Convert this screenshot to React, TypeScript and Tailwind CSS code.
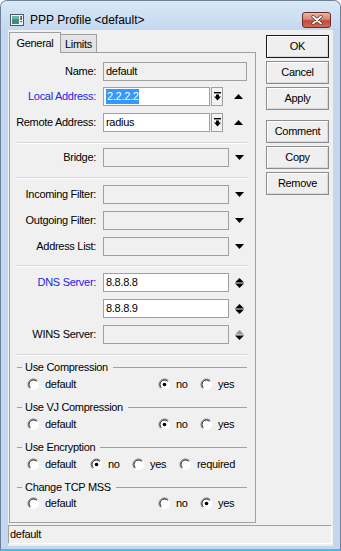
import React from "react";

function Radio({ checked }: { checked?: boolean }) {
  return (
    <svg width="13" height="13" viewBox="0 0 13 13" className="shrink-0">
      <circle cx="6.5" cy="6.5" r="5.5" fill="#fff" />
      <path d="M10.4 2.6 A5.5 5.5 0 0 0 2.6 10.4" stroke="#7a7a7a" fill="none" strokeWidth="1" />
      <path d="M9.7 3.3 A4.5 4.5 0 0 0 3.3 9.7" stroke="#1a1a1a" fill="none" strokeWidth="1" />
      {checked && <circle cx="6.5" cy="6.5" r="1.8" fill="#000" />}
    </svg>
  );
}

function RadioItem({ label, checked, w }: { label: string; checked?: boolean; w?: string }) {
  return (
    <div className={`flex items-center h-[14px] ${w ?? ""}`}>
      <Radio checked={checked} />
      <span className="ml-[5px]">{label}</span>
    </div>
  );
}

function GroupHeader({ title, mt }: { title: string; mt: string }) {
  return (
    <div className={`flex items-center h-[14px] ${mt}`}>
      <div className="ml-[7px] w-[5px] h-px bg-[#a0a0a0]" />
      <span className="ml-[3px]">{title}</span>
      <div className="ml-[5px] mr-[8px] flex-1 h-px bg-[#a0a0a0]" />
    </div>
  );
}

function Row({
  label,
  blue,
  mt,
  children,
}: {
  label?: string;
  blue?: boolean;
  mt: string;
  children: React.ReactNode;
}) {
  return (
    <div className={`flex items-center h-[19px] ${mt}`}>
      <div className={`w-[86px] text-right whitespace-nowrap ${blue ? "text-[#1c1ce6]" : "text-black"}`}>
        {label}
      </div>
      <div className="ml-[7px] flex items-center">{children}</div>
    </div>
  );
}

function Field({ w, white, children }: { w: string; white?: boolean; children?: React.ReactNode }) {
  return (
    <div
      className={`h-[19px] ${w} border border-[#a0a0a0] ${
        white ? "bg-white" : "bg-[#f0f0f0]"
      } flex items-center pl-[2px] overflow-hidden whitespace-nowrap`}
    >
      {children}
    </div>
  );
}

function Sep({ mt }: { mt: string }) {
  return (
    <div className={`ml-[7px] w-[230px] ${mt}`}>
      <div className="h-px bg-[#d5d5d5]" />
      <div className="h-px bg-white" />
    </div>
  );
}

function DropBtn() {
  return (
    <div className="ml-[1px] w-[12px] h-[19px] border border-[#a0a0a0] bg-[#f4f4f4] flex items-center justify-center">
      <svg width="7" height="9" viewBox="0 0 7 9">
        <rect x="0" y="0" width="7" height="1.4" fill="#000" />
        <path d="M2 2.6h3v2h2l-3.5 4l-3.5-4h2z" fill="#000" />
      </svg>
    </div>
  );
}

function Up({ ml }: { ml: string }) {
  return (
    <svg width="9" height="5" viewBox="0 0 9 5" className={ml}>
      <path d="M0 5L4.5 0L9 5Z" fill="#000" />
    </svg>
  );
}

function Down({ ml }: { ml: string }) {
  return (
    <svg width="9" height="5" viewBox="0 0 9 5" className={ml}>
      <path d="M0 0L9 0L4.5 5Z" fill="#000" />
    </svg>
  );
}

function UpDown({ disabled }: { disabled?: boolean }) {
  return (
    <svg width="9" height="10" viewBox="0 0 9 10" className="ml-[6px]">
      <path d="M0 4.5L4.5 0L9 4.5Z" fill={disabled ? "#8e9a8e" : "#000"} />
      <path d="M0 5.5L9 5.5L4.5 10Z" fill="#000" />
    </svg>
  );
}

function Btn({ children, def, mt }: { children: React.ReactNode; def?: boolean; mt?: string }) {
  return (
    <div
      className={`h-[23px] w-[63px] flex items-center justify-center border ${
        def ? "border-[#1a1a1a]" : "border-[#8c8c8c]"
      } bg-[#efefef] shadow-[inset_1px_1px_0_#ffffff,inset_-1px_-1px_0_#d8d8d8] ${mt ?? ""}`}
    >
      {children}
    </div>
  );
}

export default function App() {
  return (
    <div className="w-[341px] h-[551px] overflow-hidden font-['Liberation_Sans',Arial,sans-serif] text-[11px] tracking-[-0.3px] text-black">
      <div className="w-[341px] h-[551px] flex flex-col rounded-t-[7px] border-t border-x border-[#6f8096] bg-[#c3d8ef] border-b-2 border-b-[#36c3e6]">
        {/* Title bar */}
        <div className="h-[29px] flex items-center pt-[8px] pl-[9px] pr-[9px] rounded-t-[6px] bg-[linear-gradient(#d9e8f7,#c3d8ef)]">
          <svg width="14" height="12" viewBox="0 0 14 12">
            <rect x="0.5" y="0.5" width="13" height="11" fill="#eef2f2" stroke="#505a5a" />
            <rect x="2" y="2" width="7" height="8" fill="#3b8e80" />
            <rect x="2" y="2" width="7" height="3" fill="#6fb3a8" />
            <rect x="10.5" y="2" width="1.2" height="4" fill="#1a1a1a" />
            <rect x="10.5" y="7" width="1.2" height="1.2" fill="#1a1a1a" />
          </svg>
          <span className="ml-[6px] text-[12px] tracking-normal">PPP Profile &lt;default&gt;</span>
          <div className="ml-auto w-[29px] h-[16px] rounded-[3px] border border-[#6e2b22] bg-[linear-gradient(#e8b5aa,#d88677_45%,#c44a3a_55%,#cf6a58)] flex items-center justify-center">
            <svg width="12" height="10" viewBox="0 0 12 10">
              <path d="M2 1.5L10 8.5M10 1.5L2 8.5" stroke="#5a2a25" strokeWidth="3.2" strokeLinecap="round" />
              <path d="M2 1.5L10 8.5M10 1.5L2 8.5" stroke="#fff" strokeWidth="1.8" strokeLinecap="round" />
            </svg>
          </div>
        </div>

        {/* Client */}
        <div className="ml-[7px] w-[325px] h-[516px] bg-[#f0f0f0] flex flex-col">
          <div className="flex">
            {/* tabs + panel */}
            <div className="pl-[1px] pt-[2px] flex flex-col">
              <div className="flex items-end h-[21px] -mb-px relative z-10">
                <div className="h-[21px] w-[52px] border-t border-x border-[#a0a0a0] bg-[#f0f0f0] flex items-center justify-center">
                  General
                </div>
                <div className="h-[19px] w-[36px] border-t border-r border-b border-[#a0a0a0] bg-[#e3e3e3] flex items-center justify-center pt-[1px]">
                  Limits
                </div>
              </div>
              <div className="w-[247px] h-[471px] border border-[#a0a0a0] bg-[#f0f0f0] flex flex-col">
                <Row label="Name:" mt="mt-[9px]">
                  <Field w="w-[144px]">default</Field>
                </Row>
                <Row label="Local Address:" blue mt="mt-[6px]">
                  <Field w="w-[107px]" white>
                    <span className="bg-[#3399ff] text-white leading-[15px] pl-[1px]">2.2.2.2</span>
                  </Field>
                  <DropBtn />
                  <Up ml="ml-[11px]" />
                </Row>
                <Row label="Remote Address:" mt="mt-[7px]">
                  <Field w="w-[107px]" white>
                    radius
                  </Field>
                  <DropBtn />
                  <Up ml="ml-[11px]" />
                </Row>
                <Sep mt="mt-[10px]" />
                <Row label="Bridge:" mt="mt-[4px]">
                  <Field w="w-[126px]" />
                  <Down ml="ml-[6px]" />
                </Row>
                <Sep mt="mt-[10px]" />
                <Row label="Incoming Filter:" mt="mt-[6px]">
                  <Field w="w-[126px]" />
                  <Down ml="ml-[6px]" />
                </Row>
                <Row label="Outgoing Filter:" mt="mt-[7px]">
                  <Field w="w-[126px]" />
                  <Down ml="ml-[6px]" />
                </Row>
                <Row label="Address List:" mt="mt-[7px]">
                  <Field w="w-[126px]" />
                  <Down ml="ml-[6px]" />
                </Row>
                <Sep mt="mt-[9px]" />
                <Row label="DNS Server:" blue mt="mt-[6px]">
                  <Field w="w-[126px]" white>
                    8.8.8.8
                  </Field>
                  <UpDown />
                </Row>
                <Row mt="mt-[7px]">
                  <Field w="w-[126px]" white>
                    8.8.8.9
                  </Field>
                  <UpDown />
                </Row>
                <Row label="WINS Server:" mt="mt-[7px]">
                  <Field w="w-[126px]" />
                  <UpDown disabled />
                </Row>
                <Sep mt="mt-[10px]" />

                <GroupHeader title="Use Compression" mt="mt-[4px]" />
                <div className="flex ml-[17px] mt-[3px]">
                  <RadioItem label="default" w="w-[131px]" />
                  <RadioItem label="no" checked w="w-[42px]" />
                  <RadioItem label="yes" />
                </div>

                <GroupHeader title="Use VJ Compression" mt="mt-[9px]" />
                <div className="flex ml-[17px] mt-[3px]">
                  <RadioItem label="default" w="w-[131px]" />
                  <RadioItem label="no" checked w="w-[42px]" />
                  <RadioItem label="yes" />
                </div>

                <GroupHeader title="Use Encryption" mt="mt-[9px]" />
                <div className="flex ml-[17px] mt-[3px]">
                  <RadioItem label="default" w="w-[63px]" />
                  <RadioItem label="no" checked w="w-[42px]" />
                  <RadioItem label="yes" w="w-[47px]" />
                  <RadioItem label="required" />
                </div>

                <GroupHeader title="Change TCP MSS" mt="mt-[9px]" />
                <div className="flex ml-[17px] mt-[2px]">
                  <RadioItem label="default" w="w-[131px]" />
                  <RadioItem label="no" w="w-[42px]" />
                  <RadioItem label="yes" checked />
                </div>
              </div>
            </div>

            {/* buttons */}
            <div className="ml-[10px] mt-[5px] flex flex-col">
              <Btn def>OK</Btn>
              <Btn mt="mt-[3px]">Cancel</Btn>
              <Btn mt="mt-[3px]">Apply</Btn>
              <Btn mt="mt-[10px]">Comment</Btn>
              <Btn mt="mt-[3px]">Copy</Btn>
              <Btn mt="mt-[3px]">Remove</Btn>
            </div>
          </div>

          {/* status bar */}
          <div className="mt-[2px] w-[324px] h-[19px] border-t border-l border-[#a0a0a0] border-r border-b border-r-white border-b-white flex items-center pl-[1px]">
            default
          </div>
        </div>
      </div>
    </div>
  );
}
